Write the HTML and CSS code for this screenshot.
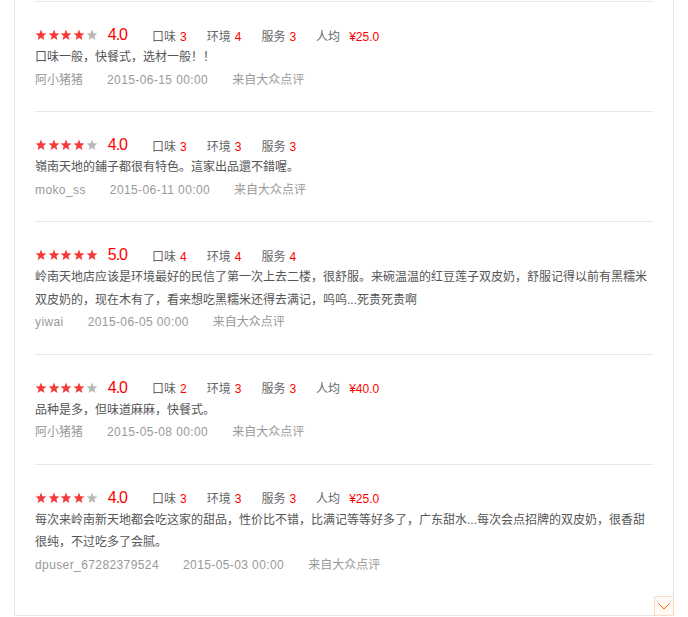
FILE: index.html
```html
<!DOCTYPE html>
<html>
<head>
    <meta charset="utf-8">
    <link rel="stylesheet" href="styles.css">
</head>
<body>
    <svg class="defs" width="0" height="0">
        <symbol id="star" viewBox="0 0 24 24">
            <polygon points="12,1.2 14.9,8.4 22.8,8.9 16.8,14 18.7,21.8 12,17.6 5.3,21.8 7.2,14 1.2,8.9 9.1,8.4"/>
        </symbol>
    </svg>

    <div class="panel">
        <ul class="review-list">
            <li class="review">
                <div class="score-row">
                    <span class="stars">
                        <svg class="star on"><use href="#star"/></svg>
                        <svg class="star on"><use href="#star"/></svg>
                        <svg class="star on"><use href="#star"/></svg>
                        <svg class="star on"><use href="#star"/></svg>
                        <svg class="star"><use href="#star"/></svg>
                    </span>
                    <span class="score">4.0</span>
                    <span class="item">口味<em>3</em></span>
                    <span class="item">环境<em>4</em></span>
                    <span class="item">服务<em>3</em></span>
                    <span class="item price">人均<em>¥25.0</em></span>
                </div>
                <p class="comment">口味一般，快餐式，选材一般！！</p>
                <div class="meta">
                    <span class="user">阿小猪猪</span>
                    <span class="date">2015-06-15 00:00</span>
                    <span class="source">来自大众点评</span>
                </div>
            </li>
            <li class="review">
                <div class="score-row">
                    <span class="stars">
                        <svg class="star on"><use href="#star"/></svg>
                        <svg class="star on"><use href="#star"/></svg>
                        <svg class="star on"><use href="#star"/></svg>
                        <svg class="star on"><use href="#star"/></svg>
                        <svg class="star"><use href="#star"/></svg>
                    </span>
                    <span class="score">4.0</span>
                    <span class="item">口味<em>3</em></span>
                    <span class="item">环境<em>3</em></span>
                    <span class="item">服务<em>3</em></span>
                </div>
                <p class="comment">嶺南天地的鋪子都很有特色。這家出品還不錯喔。</p>
                <div class="meta">
                    <span class="user latin">moko_ss</span>
                    <span class="date">2015-06-11 00:00</span>
                    <span class="source">来自大众点评</span>
                </div>
            </li>
            <li class="review">
                <div class="score-row">
                    <span class="stars">
                        <svg class="star on"><use href="#star"/></svg>
                        <svg class="star on"><use href="#star"/></svg>
                        <svg class="star on"><use href="#star"/></svg>
                        <svg class="star on"><use href="#star"/></svg>
                        <svg class="star on"><use href="#star"/></svg>
                    </span>
                    <span class="score">5.0</span>
                    <span class="item">口味<em>4</em></span>
                    <span class="item">环境<em>4</em></span>
                    <span class="item">服务<em>4</em></span>
                </div>
                <p class="comment">岭南天地店应该是环境最好的民信了第一次上去二楼，很舒服。来碗温温的红豆莲子双皮奶，舒服记得以前有黑糯米双皮奶的，现在木有了，看来想吃黑糯米还得去满记，呜呜...死贵死贵啊</p>
                <div class="meta">
                    <span class="user latin">yiwai</span>
                    <span class="date">2015-06-05 00:00</span>
                    <span class="source">来自大众点评</span>
                </div>
            </li>
            <li class="review">
                <div class="score-row">
                    <span class="stars">
                        <svg class="star on"><use href="#star"/></svg>
                        <svg class="star on"><use href="#star"/></svg>
                        <svg class="star on"><use href="#star"/></svg>
                        <svg class="star on"><use href="#star"/></svg>
                        <svg class="star"><use href="#star"/></svg>
                    </span>
                    <span class="score">4.0</span>
                    <span class="item">口味<em>2</em></span>
                    <span class="item">环境<em>3</em></span>
                    <span class="item">服务<em>3</em></span>
                    <span class="item price">人均<em>¥40.0</em></span>
                </div>
                <p class="comment">品种是多，但味道麻麻，快餐式。</p>
                <div class="meta">
                    <span class="user">阿小猪猪</span>
                    <span class="date">2015-05-08 00:00</span>
                    <span class="source">来自大众点评</span>
                </div>
            </li>
            <li class="review">
                <div class="score-row">
                    <span class="stars">
                        <svg class="star on"><use href="#star"/></svg>
                        <svg class="star on"><use href="#star"/></svg>
                        <svg class="star on"><use href="#star"/></svg>
                        <svg class="star on"><use href="#star"/></svg>
                        <svg class="star"><use href="#star"/></svg>
                    </span>
                    <span class="score">4.0</span>
                    <span class="item">口味<em>3</em></span>
                    <span class="item">环境<em>3</em></span>
                    <span class="item">服务<em>3</em></span>
                    <span class="item price">人均<em>¥25.0</em></span>
                </div>
                <p class="comment">每次来岭南新天地都会吃这家的甜品，性价比不错，比满记等等好多了，广东甜水...每次会点招牌的双皮奶，很香甜很纯，不过吃多了会腻。</p>
                <div class="meta">
                    <span class="user latin">dpuser_67282379524</span>
                    <span class="date">2015-05-03 00:00</span>
                    <span class="source">来自大众点评</span>
                </div>
            </li>
        </ul>
        <a class="to-top" href="#">
            <svg width="12" height="7" viewBox="0 0 12 7"><polyline points="0.5,0.5 6,6 11.5,0.5"/></svg>
        </a>
    </div>
</body>
</html>
```

FILE: styles.css
```css
body
{
    margin: 0;
    background-color: #fff;
    font-family: "Liberation Sans", "Noto Sans CJK SC", sans-serif;
    font-size: 12px;
    color: #555;
}
.defs
{
    position: absolute;
    width: 0;
    height: 0;
}
.panel
{
    position: relative;
    box-sizing: border-box;
    width: 660px;
    margin-left: 14px;
    padding: 1px 20px 19px 20px;
    border: 1px solid #e6e6e6;
    border-top: none;
}
.review-list
{
    list-style: none;
    margin: 0;
    padding: 0;
}
.review
{
    padding: 22px 0 20px 0;
    border-top: 1px solid #e6e6e6;
}
.score-row
{
    display: flex;
    align-items: center;
    height: 22px;
}
.stars
{
    display: flex;
    gap: 0.7px;
}
.star
{
    width: 12px;
    height: 12px;
    fill: #b8b8b8;
}
.star.on
{
    fill: #f53a3a;
}
.score
{
    margin: 0 25px 0 10px;
    font-size: 16px;
    letter-spacing: -1px;
    color: #f00;
}
.item
{
    margin-right: 20px;
    color: #666;
}
.item em
{
    margin-left: 4px;
    font-style: normal;
    color: #f00;
}
.item.price em
{
    margin-left: 9px;
}
.comment
{
    margin: 0;
    line-height: 22.5px;
    color: #555;
}
.meta
{
    display: flex;
    height: 22.5px;
    line-height: 22.5px;
    color: #999;
}
.meta span
{
    margin-right: 24px;
}
.meta .date,
.meta .latin
{
    letter-spacing: 0.4px;
}
.to-top
{
    position: absolute;
    right: -1px;
    bottom: -1px;
    box-sizing: border-box;
    width: 20px;
    height: 20px;
    display: flex;
    align-items: center;
    justify-content: center;
    border: 1px solid #f9dcc6;
    background-color: #fffaf6;
}
.to-top svg
{
    fill: none;
    stroke: #f60;
    stroke-width: 1;
}
```
